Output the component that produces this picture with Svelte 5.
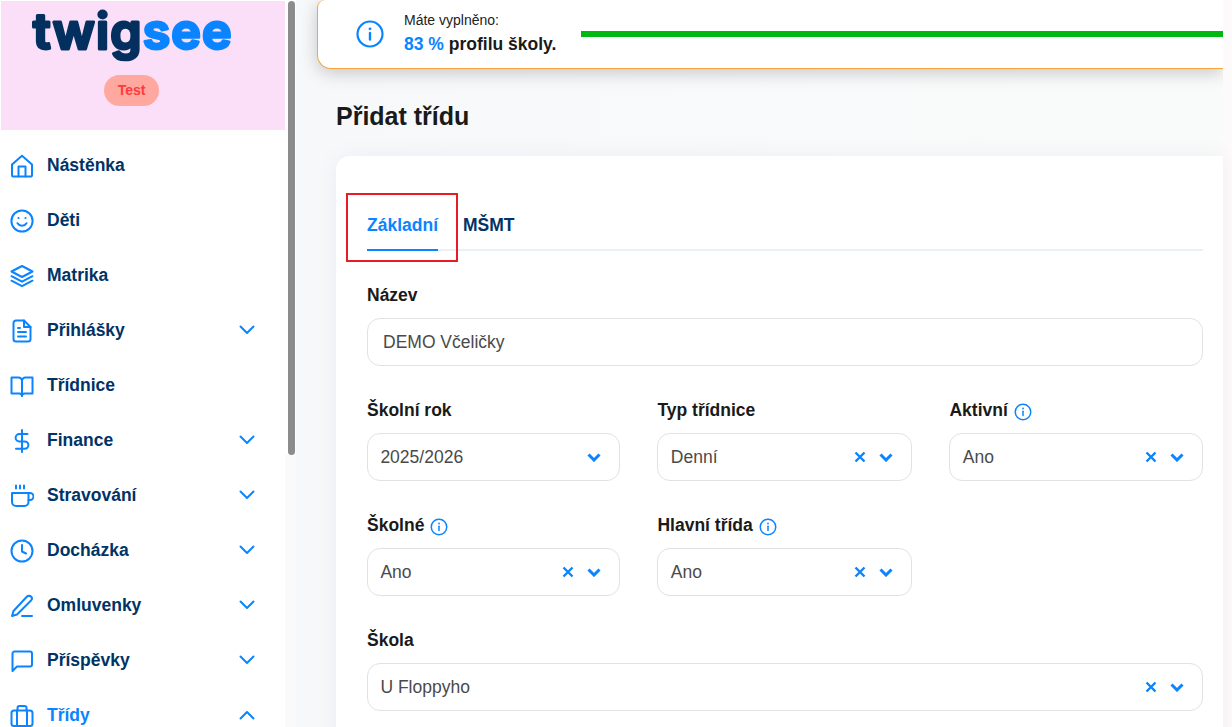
<script>
	const nav = [
		{ label: 'Nástěnka', icon: 'home' },
		{ label: 'Děti', icon: 'smile' },
		{ label: 'Matrika', icon: 'layers' },
		{ label: 'Přihlášky', icon: 'file', caret: 'down' },
		{ label: 'Třídnice', icon: 'book' },
		{ label: 'Finance', icon: 'dollar', caret: 'down' },
		{ label: 'Stravování', icon: 'coffee', caret: 'down' },
		{ label: 'Docházka', icon: 'clock', caret: 'down' },
		{ label: 'Omluvenky', icon: 'pen', caret: 'down' },
		{ label: 'Příspěvky', icon: 'chat', caret: 'down' },
		{ label: 'Třídy', icon: 'case', caret: 'up', active: true }
	];
</script>

{#snippet info()}
	<svg class="info" viewBox="0 0 18 18" fill="none" stroke="currentColor">
		<circle cx="9" cy="9" r="7.75" stroke-width="1.5" />
		<path d="M9 8.2v4.3" stroke-width="1.5" stroke-linecap="round" />
		<circle cx="9" cy="5.5" r="0.9" fill="currentColor" stroke="none" />
	</svg>
{/snippet}

{#snippet controls(clearable)}
	<span class="controls">
		{#if clearable}
			<svg class="x" viewBox="0 0 12 12" fill="none" stroke="currentColor" stroke-width="2.4">
				<path d="M1.5 1.5l9 9M10.5 1.5l-9 9" />
			</svg>
		{/if}
		<svg class="chev" viewBox="0 0 14 9" fill="none" stroke="currentColor" stroke-width="3">
			<path d="M1.500 1.500L7 7l5.500-5.500" />
		</svg>
	</span>
{/snippet}

{#snippet navIcon(name)}
	<svg class="nav-icon" viewBox="0 0 24 24" fill="none" stroke="currentColor" stroke-width="2" stroke-linecap="round" stroke-linejoin="round">
		{#if name === 'home'}
			<path d="M2 10.500L12 1.800l10 8.700V21a1.600 1.600 0 0 1-1.600 1.600H3.600A1.600 1.600 0 0 1 2 21z" />
			<path d="M8.500 22.500V12.500h7v10" />
		{:else if name === 'smile'}
			<circle cx="12" cy="12" r="10.600" />
			<path d="M7.500 14.200c1.200 1.800 2.700 2.600 4.500 2.600s3.300-.8 4.500-2.600" />
			<circle cx="8.500" cy="9" r="1.100" fill="currentColor" stroke="none" />
			<circle cx="15.500" cy="9" r="1.100" fill="currentColor" stroke="none" />
		{:else if name === 'layers'}
			<path d="M12 2L1.500 7.500 12 13l10.500-5.500z" />
			<path d="M1.500 12.200L12 17.700l10.500-5.500" />
			<path d="M1.500 16.700L12 22.200l10.500-5.500" />
		{:else if name === 'file'}
			<path d="M14 1.500H6A2.500 2.500 0 0 0 3.500 4v16A2.500 2.500 0 0 0 6 22.500h12a2.500 2.500 0 0 0 2.500-2.500V8z" />
			<path d="M14 1.500V8h6.500M8 13h8M8 17.500h8M8 9h2" />
		{:else if name === 'book'}
			<path d="M1.500 3.500h7a3.500 3.500 0 0 1 3.500 3.500v15a2.600 2.600 0 0 0-2.600-2.600H1.500z" />
			<path d="M22.500 3.500h-7A3.500 3.500 0 0 0 12 7v15a2.600 2.600 0 0 1 2.600-2.600h7.900z" />
		{:else if name === 'dollar'}
			<path d="M12 1v22" />
			<path d="M17.500 5H9.300a3.700 3.700 0 0 0 0 7.400h5.400a3.700 3.700 0 0 1 0 7.400H6" />
		{:else if name === 'coffee'}
			<path d="M2 9h16.500v9a4 4 0 0 1-4 4H6a4 4 0 0 1-4-4z" />
			<path d="M18.500 9h1.500a3.500 3.500 0 0 1 0 7h-1.500" />
			<path d="M6 1.500v3M10 1.500v3M14 1.500v3" />
		{:else if name === 'clock'}
			<circle cx="12" cy="12" r="10.500" />
			<path d="M12 6v6.500l4 2" />
		{:else if name === 'pen'}
			<path d="M17 2.500a2.800 2.800 0 0 1 4 4L7 20.500l-5 1.500 1.500-5z" />
			<path d="M12 22h10" />
		{:else if name === 'chat'}
			<path d="M22 15.500a2 2 0 0 1-2 2H7L2.500 22V4.500a2 2 0 0 1 2-2H20a2 2 0 0 1 2 2z" />
		{:else if name === 'case'}
			<rect x="1.500" y="6.500" width="21" height="15.500" rx="2.500" />
			<path d="M7 22V6.500M17 22V6.500M7.500 6.500V4a2 2 0 0 1 2-2h5a2 2 0 0 1 2 2v2.500" />
		{/if}
	</svg>
{/snippet}

<div class="page">
	<aside class="sidebar">
		<div class="brand">
			<svg class="logo" viewBox="0 0 204 70">
				<text x="3" y="47" class="logo-text"><tspan class="dark">twig</tspan><tspan class="light">see</tspan></text>
			</svg>
			<span class="badge">Test</span>
		</div>
		<nav>
			{#each nav as item}
				<div class="nav-item" class:active={item.active}>
					{@render navIcon(item.icon)}
					<span class="nav-label">{item.label}</span>
					{#if item.caret}
						<svg class="caret" class:up={item.caret === 'up'} viewBox="0 0 16 10" fill="none" stroke="currentColor" stroke-width="2" stroke-linecap="round" stroke-linejoin="round">
							<path d="M1.500 1.500L8 8l6.500-6.500" />
						</svg>
					{/if}
				</div>
			{/each}
		</nav>
		<div class="track"></div>
		<div class="scrollthumb"></div>
	</aside>

	<main>
		<div class="profile">
			<svg class="profile-icon" viewBox="0 0 28 28" fill="none" stroke="currentColor">
				<circle cx="14" cy="14" r="12.500" stroke-width="2.200" />
				<path d="M14 13v6.500" stroke-width="2.400" stroke-linecap="round" />
				<circle cx="14" cy="8.800" r="1.400" fill="currentColor" stroke="none" />
			</svg>
			<div class="profile-text">
				<div class="profile-small">Máte vyplněno:</div>
				<div class="profile-big"><span class="pct">83 %</span> profilu školy.</div>
			</div>
			<div class="progress"></div>
		</div>

		<div class="content">
			<h1>Přidat třídu</h1>
			<section class="card">
				<div class="tabs">
					<div class="tab current">Základní</div>
					<div class="tab">MŠMT</div>
					<div class="tab-highlight"></div>
				</div>

				<div class="field">
					<div class="label">Název</div>
					<div class="input">DEMO Včeličky</div>
				</div>

				<div class="grid">
					<div class="field">
						<div class="label">Školní rok</div>
						<div class="select">2025/2026 {@render controls(false)}</div>
					</div>
					<div class="field">
						<div class="label">Typ třídnice</div>
						<div class="select">Denní {@render controls(true)}</div>
					</div>
					<div class="field">
						<div class="label">Aktivní {@render info()}</div>
						<div class="select">Ano {@render controls(true)}</div>
					</div>
					<div class="field">
						<div class="label">Školné {@render info()}</div>
						<div class="select">Ano {@render controls(true)}</div>
					</div>
					<div class="field">
						<div class="label">Hlavní třída {@render info()}</div>
						<div class="select">Ano {@render controls(true)}</div>
					</div>
				</div>

				<div class="field">
					<div class="label">Škola</div>
					<div class="select">U Floppyho {@render controls(true)}</div>
				</div>
			</section>
		</div>
	</main>
</div>

<style>
	:global(body) {
		margin: 0;
		font-family: 'Liberation Sans', Arial, sans-serif;
		overflow: hidden;
	}

	.page {
		display: flex;
		height: 727px;
		overflow: hidden;
		background: #fcfafa;
	}

	.sidebar {
		position: relative;
		box-sizing: border-box;
		flex: 0 0 296px;
		height: 727px;
		padding: 1px 11px 0 1px;
		background: #fff;
		overflow: hidden;
	}

	.brand {
		display: flex;
		flex-direction: column;
		align-items: center;
		box-sizing: border-box;
		height: 129px;
		padding: 1px 23px 0 0;
		background: #fbdff8;
	}

	.logo {
		display: block;
		flex: none;
		width: 204px;
		height: 70px;
	}

	.logo-text {
		font-family: Inter, sans-serif;
		font-size: 50px;
		font-weight: 600;
		stroke-width: 3;
		stroke-linejoin: round;
		letter-spacing: 1.200px;
	}

	.dark {
		fill: #03305f;
		stroke: #03305f;
	}

	.light {
		fill: #0a84ff;
		stroke: #0a84ff;
	}

	.badge {
		margin-top: 3px;
		padding: 0 13.500px;
		height: 31px;
		line-height: 31px;
		border-radius: 16px;
		background: #ffa8a0;
		color: #fb3c3c;
		font-size: 14px;
		font-weight: 700;
	}

	nav {
		padding-top: 8px;
	}

	.nav-item {
		display: flex;
		align-items: center;
		height: 55px;
		padding: 0 30px 0 9px;
		color: #003366;
	}

	.nav-item.active {
		color: #0a84ff;
	}

	.nav-icon {
		flex: none;
		width: 24px;
		height: 24px;
		color: #0a84ff;
	}

	.nav-label {
		flex: 1;
		margin-left: 13px;
		font-size: 17.500px;
		font-weight: 700;
	}

	.caret {
		width: 16px;
		height: 10px;
		margin-top: -1px;
		color: #0a84ff;
	}

	.caret.up {
		transform: rotate(180deg);
	}

	.track {
		position: absolute;
		top: 455px;
		right: 0;
		bottom: 0;
		width: 11px;
		background: #fafafa;
	}

	.scrollthumb {
		position: absolute;
		top: 1px;
		right: 1px;
		width: 7px;
		height: 454px;
		border-radius: 4px;
		background: #8c8c8c;
	}

	main {
		flex: 1;
		min-width: 0;
		padding-right: 9px;
		background: linear-gradient(90deg, #f6f8fa 0%, #f8fafb 60%, #fafafa 100%);
		background-clip: content-box;
	}

	.profile {
		display: flex;
		align-items: center;
		box-sizing: border-box;
		height: 69px;
		margin-left: 21px;
		padding-left: 38px;
		background: #fff;
		border: solid #f7a43c;
		border-width: 0 0 1.500px 1px;
		border-radius: 8px 0 0 14px;
		box-shadow: 0 4px 18px rgba(0, 0, 0, 0.2);
		clip-path: inset(0 0 -30px -30px);
	}

	.profile-icon {
		flex: none;
		width: 28px;
		height: 28px;
		color: #0a84ff;
	}

	.profile-text {
		margin: -2px 0 0 20px;
	}

	.profile-small {
		font-size: 14px;
		line-height: 16px;
		color: #222;
	}

	.profile-big {
		margin-top: 6px;
		font-size: 17.500px;
		line-height: 20px;
		font-weight: 700;
		color: #1a1a1a;
		white-space: nowrap;
	}

	.pct {
		color: #0a84ff;
	}

	.progress {
		flex: 1;
		height: 6px;
		margin-left: 25px;
		background: #00b812;
	}

	.content {
		padding-left: 40px;
	}

	h1 {
		margin: 32px 0 0;
		font-size: 25px;
		line-height: 30px;
		font-weight: 700;
		color: #1a1a1a;
	}

	.card {
		margin-top: 25px;
		padding: 37px 20px 0 31px;
		height: 600px;
		background: #fff;
		border-top-left-radius: 14px;
		box-shadow: 0 0 24px rgba(0, 40, 80, 0.05);
	}

	.tabs {
		position: relative;
		display: flex;
		height: 56px;
		border-bottom: 2px solid #e8f1fa;
		margin-bottom: 35px;
	}

	.tab {
		box-sizing: border-box;
		height: 58px;
		padding-top: 22px;
		margin-right: 25px;
		font-size: 17.500px;
		line-height: 20px;
		font-weight: 700;
		color: #003366;
	}

	.tab.current {
		color: #0a84ff;
		border-bottom: 2px solid #0a84ff;
	}

	.tab-highlight {
		position: absolute;
		left: -21px;
		top: 0;
		width: 108px;
		height: 65px;
		border: 2px solid #e81c24;
	}

	.field {
		min-width: 0;
	}

	.label {
		box-sizing: border-box;
		display: flex;
		align-items: center;
		gap: 6px;
		height: 20px;
		padding-bottom: 2px;
		font-size: 17.500px;
		font-weight: 700;
		color: #1a1a1a;
	}

	.info {
		flex: none;
		width: 18px;
		height: 18px;
		margin-bottom: -3px;
		color: #0a84ff;
	}

	.input,
	.select {
		box-sizing: border-box;
		display: flex;
		align-items: center;
		height: 48px;
		margin-top: 12px;
		border: 1px solid #e2e2e2;
		border-radius: 13px;
		background: #fff;
		font-size: 17.500px;
		color: #4a4a4a;
	}

	.input {
		padding-left: 15px;
	}

	.select {
		justify-content: space-between;
		padding: 0 18px 0 12.400px;
	}

	.grid {
		display: grid;
		grid-template-columns: 253.450px 255px 253.550px;
		column-gap: 37px;
		row-gap: 35px;
		margin: 35px 0;
	}

	.controls {
		display: flex;
		align-items: center;
		gap: 13px;
	}

	.x {
		width: 12px;
		height: 12px;
		color: #0a84ff;
	}

	.chev {
		width: 14px;
		height: 9px;
		color: #0a84ff;
	}
</style>
